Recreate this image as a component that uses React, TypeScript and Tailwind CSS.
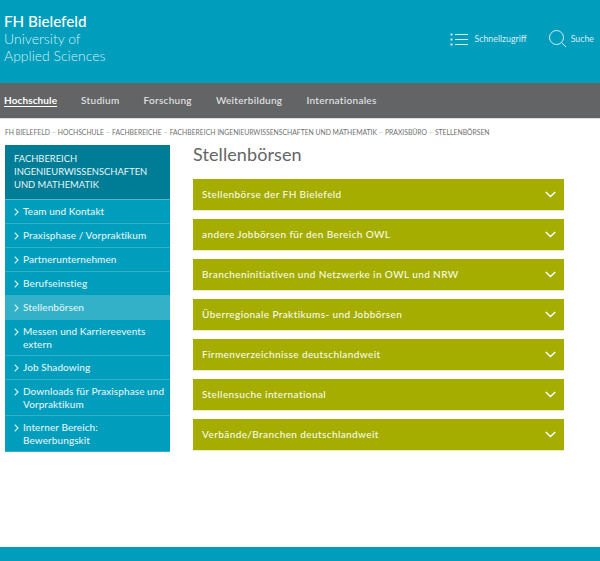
const font = "font-['Lato','Noto_Sans',sans-serif]";

const crumbs = [
  "FH BIELEFELD",
  "HOCHSCHULE",
  "FACHBEREICHE",
  "FACHBEREICH INGENIEURWISSENSCHAFTEN UND MATHEMATIK",
  "PRAXISBÜRO",
  "STELLENBÖRSEN",
];

const sideItems = [
  { label: "Team und Kontakt" },
  { label: "Praxisphase / Vorpraktikum" },
  { label: "Partnerunternehmen" },
  { label: "Berufseinstieg" },
  { label: "Stellenbörsen", active: true },
  { label: "Messen und Karriereevents extern" },
  { label: "Job Shadowing" },
  { label: "Downloads für Praxisphase und Vorpraktikum" },
  { label: "Interner Bereich: Bewerbungskit" },
];

const panels = [
  "Stellenbörse der FH Bielefeld",
  "andere Jobbörsen für den Bereich OWL",
  "Brancheninitiativen und Netzwerke in OWL und NRW",
  "Überregionale Praktikums- und Jobbörsen",
  "Firmenverzeichnisse deutschlandweit",
  "Stellensuche international",
  "Verbände/Branchen deutschlandweit",
];

export default function App() {
  return (
    <div className={`${font} w-[600px] h-[561px] overflow-hidden bg-white flex flex-col`}>
      <header className="h-[83px] bg-[#009dbc] flex justify-between text-white">
        <div className="pl-[4px] pt-[12px]">
          <div className="text-[15.2px] leading-[18px] font-medium">FH Bielefeld</div>
          <div className="text-[14px] leading-[17px] font-light text-[#d5f0f5]">University of</div>
          <div className="text-[14px] leading-[17px] font-light text-[#d5f0f5]">Applied Sciences</div>
        </div>
        <div className="flex items-start pt-[30px] pr-[6px] text-[#d5f0f5] text-[8.8px]">
          <svg width="18" height="13" viewBox="0 0 18 13" fill="none" stroke="currentColor" className="mt-[3px]">
            <path d="M5 1.5h13M5 6.5h13M5 11.5h13" strokeWidth="1" />
            <path d="M.5 1.5h2M.5 6.5h2M.5 11.5h2" strokeWidth="2" />
          </svg>
          <span className="ml-[6px] mt-[3px] leading-[12px]">Schnellzugriff</span>
          <svg width="18" height="18" viewBox="0 0 18 18" fill="none" stroke="currentColor" className="ml-[22px]">
            <circle cx="7.5" cy="7.5" r="7" strokeWidth="1" />
            <path d="M12.5 12.5 17 17" strokeWidth="1" />
          </svg>
          <span className="ml-[4px] mt-[3px] leading-[12px]">Suche</span>
        </div>
      </header>

      <nav className="h-[36px] bg-[#636466] border-b border-[#dcdcdc] flex items-center gap-[24px] pl-[4px] text-[10px] font-medium tracking-[0.3px] text-[#e6e6e6]">
        <a className="text-white font-bold tracking-[0.1px] underline underline-offset-2">Hochschule</a>
        <a>Studium</a>
        <a>Forschung</a>
        <a>Weiterbildung</a>
        <a>Internationales</a>
      </nav>

      <div className="flex items-center pl-[5px] h-[26px] text-[6.8px] text-[#6f7072] whitespace-nowrap">
        {crumbs.map((c, i) => (
          <span key={c}>
            {i > 0 && <span className="mx-[2px] text-[#b5b5b5]">–</span>}
            {c}
          </span>
        ))}
      </div>

      <div className="flex-1 flex items-start pl-[5px]">
        <aside className="w-[165px] bg-[#009dbc]">
          <div className="h-[55px] bg-[#007d96] border-b border-[#4db8cd] pl-[9px] pt-[7px] text-[9.4px] leading-[13px] text-[#e8f6f8]">
            FACHBEREICH
            <br />
            INGENIEURWISSENSCHAFTEN
            <br />
            UND MATHEMATIK
          </div>
          {sideItems.map((item) => (
            <div
              key={item.label}
              className={`flex min-h-[24px] border-b border-[#33b1c9] pl-[9px] pt-[5px] pb-[4px] text-[10px] leading-[13px] font-medium tracking-[0.08px] text-[#e0f4f7] ${item.active ? "bg-[#33b1c9]" : ""}`}
            >
              <svg width="5" height="8" viewBox="0 0 5 8" fill="none" stroke="currentColor" strokeWidth="1.1" className="mt-[3px] mr-[4px] shrink-0">
                <path d="M.7.7 4 4 .7 7.3" />
              </svg>
              <span className="max-w-[142px]">{item.label}</span>
            </div>
          ))}
        </aside>

        <main className="ml-[23px] w-[371px]">
          <h1 className="text-[18px] leading-[18px] text-[#636466] tracking-[0.1px] mb-[16px]">Stellenbörsen</h1>
          <div className="flex flex-col gap-[8px]">
            {panels.map((p) => (
              <div
                key={p}
                className="h-[32px] bg-[#a4ad00] border-b border-[#e9ebc2] pl-[9px] pr-[8px] flex items-center justify-between text-[10px] font-medium tracking-[0.4px] text-[#fbfce8]"
              >
                <span>{p}</span>
                <svg width="11" height="7" viewBox="0 0 11 7" fill="none" stroke="white" strokeWidth="1.4">
                  <path d="M.7 1 5.5 5.6 10.3 1" />
                </svg>
              </div>
            ))}
          </div>
        </main>
      </div>

      <footer className="h-[14px] bg-[#009dbc]" />
    </div>
  );
}
